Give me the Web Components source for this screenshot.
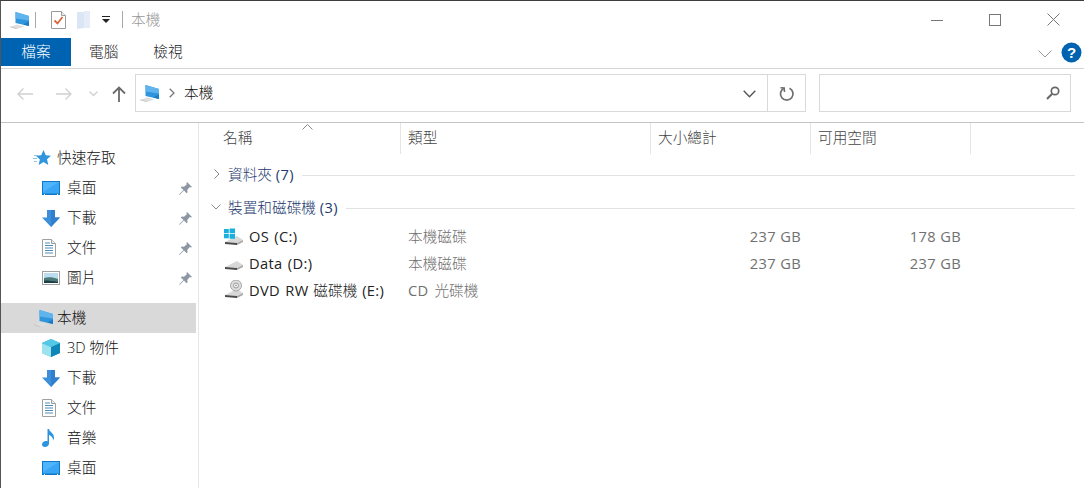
<!DOCTYPE html>
<html lang="zh-Hant"><head><meta charset="utf-8"><title>本機</title>
<style>
html,body{margin:0;height:100%;background:#fff;overflow:hidden}
body{font:300 14.67px/20px "Open Sans","Noto Sans CJK TC",sans-serif;color:#111}
</style></head><body>
<fx-window>
  <fx-titlebar slot="top">本機</fx-titlebar>
  <fx-ribbon slot="top"></fx-ribbon>
  <fx-address slot="top"></fx-address>
  <fx-nav slot="nav">
    <fx-nav-item icon="star" level="0">快速存取</fx-nav-item>
    <fx-nav-item icon="desktop" pin>桌面</fx-nav-item>
    <fx-nav-item icon="down" pin>下載</fx-nav-item>
    <fx-nav-item icon="doc" pin>文件</fx-nav-item>
    <fx-nav-item icon="pic" pin>圖片</fx-nav-item>
    <fx-nav-item icon="pc" level="0" selected style="margin-top:10px">本機</fx-nav-item>
    <fx-nav-item icon="cube">3D 物件</fx-nav-item>
    <fx-nav-item icon="down">下載</fx-nav-item>
    <fx-nav-item icon="doc">文件</fx-nav-item>
    <fx-nav-item icon="music">音樂</fx-nav-item>
    <fx-nav-item icon="desktop">桌面</fx-nav-item>
  </fx-nav>
  <fx-list slot="main">
    <fx-header></fx-header>
    <fx-group count="資料夾 (7)" style="margin-top:10px"></fx-group>
    <fx-group count="裝置和磁碟機 (3)" open style="margin-top:13px">
      <fx-drive icon="os" name="OS (C:)" type="本機磁碟" size="237 GB" free="178 GB"></fx-drive>
      <fx-drive icon="hdd" name="Data (D:)" type="本機磁碟" size="237 GB" free="237 GB"></fx-drive>
      <fx-drive icon="dvd" name="DVD RW 磁碟機 (E:)" type="CD 光碟機"></fx-drive>
    </fx-group>
  </fx-list>
</fx-window>
<script>
const DISK=y=>`<path d="M1 ${y}L13 ${y-6}l6 4-6 3z" fill="#d8d8d8"/><path d="M1 ${y}l12 1v2L1 ${y+2}z" fill="#4a4a4a"/><path d="M13 ${y+1}l6-3v2l-6 3z" fill="#a8a8a8"/>`;
const ICONS={
pc:`<svg width="21" height="18" viewBox="0 0 21 18"><path d="M1 16l7-2.500 7.500 2L7.500 18z" fill="#dedede"/><path d="M1 16l6.500 2v-.6L1.500 15.500z" fill="#b5b5b5"/><path d="M6.500 1 20 5v10L6.500 12z" fill="#2f95dc"/><path d="M6.500 1 20 5v4.500L6.500 7.500z" fill="#5fb4ee"/><path d="M20 15l-6-1.400 6-3z" fill="#1b7cc4"/></svg>`,
star:`<svg width="18" height="17" viewBox="0 0 18 17"><path d="M10.500 0l2.300 5.300 5.200.4-4 3.600 1.300 5.700-4.800-3-3.800 2.600-1-.2 1.200-5-4-3.600 5.300-.5z" fill="#2f95dc"/><path d="M1 5.500h4M0 8.500h4M1 11.500h3" stroke="#8cc4ea" stroke-width="1.200"/></svg>`,
desktop:`<svg width="18" height="14" viewBox="0 0 18 14"><rect width="18" height="14" fill="#0f78c8"/><rect x="1" y="1" width="16" height="11.500" fill="#38a6f5"/><path d="M1 1h16L1 11z" fill="#4eb4fb"/><path d="M2 13.500h1M15 13.500h1" stroke="#fff"/></svg>`,
down:`<svg width="18" height="17" viewBox="0 0 18 17"><path d="M5 0h8v7.500h5L9 17 0 7.500h5z" fill="#3d8fdc"/><path d="M9 0h4v7.500h5L9 17z" fill="#3080cc"/></svg>`,
doc:`<svg width="14" height="18" viewBox="0 0 14 18"><path d="M.5.500h9l4 4v13H.5z" fill="#fff" stroke="#a0a0a0"/><path d="M9.500.500v4h4" fill="#e8e8e8" stroke="#a0a0a0"/><path d="M3 4h5M3 6.500h8M3 9h8M3 11.500h8M3 14h8" stroke="#4f8fb8"/></svg>`,
pic:`<svg width="18" height="14" viewBox="0 0 18 14"><rect x=".5" y=".5" width="17" height="13" fill="#fff" stroke="#a0a0a0"/><rect x="2" y="2" width="14" height="10" fill="#bcdcf0"/><path d="M2 7c4-1 9-1 14 1v4H2z" fill="#4d7a78"/><path d="M2 9.500c5 0 9 .5 14 1.500V12H2z" fill="#1f3f48"/></svg>`,
cube:`<svg width="18" height="18" viewBox="0 0 18 18"><path d="M9 0l9 4v10l-9 4-9-4V4z" fill="#2aa9d6"/><path d="M0 4l9 4v10l-9-4z" fill="#9ce3ef"/><path d="M18 4 9 8v10l9-4z" fill="#0f86b8"/><path d="M9 0l9 4-9 4-9-4z" fill="#54c8e6"/></svg>`,
music:`<svg width="14" height="18" viewBox="0 0 14 18"><path d="M5.500 0h1.500c.5 3 5 4 5 8.500 0 1-.3 2-1 3 .2-3-2-5-4-5.500V14.500c0 2-2 3.500-4 3.500S0 17 0 15.200 2 12 4 12c.6 0 1.100.1 1.500.3z" fill="#2c93e0"/></svg>`,
pin:`<svg width="13" height="13" viewBox="0 0 13 13"><path d="M8 0l5 5-1.200.6-1-.5L8.200 8l.4 2.300-1 1L5 8.500 1 12.500l-1 .5.500-1 4-4L1.800 5.400l1-1L5 4.800 7.900 2.200l-.5-1z" fill="#8d97a3"/></svg>`,
os:`<svg width="20" height="20" viewBox="0 0 20 20">${DISK(16)}<path d="M0 8h4.800v4.300H0zM5.600 8H11v4.800H5.600zM0 3h4.800v4.200H0zM5.600 2.500H11v4.700H5.600z" fill="#19b0e0"/></svg>`,
hdd:`<svg width="20" height="20" viewBox="0 0 20 20">${DISK(14)}</svg>`,
dvd:`<svg width="20" height="20" viewBox="0 0 20 20">${DISK(15)}<circle cx="12" cy="5.500" r="5.500" fill="#dcdcdc" stroke="#a8a8a8"/><circle cx="12" cy="5.500" r="2.500" fill="#f2f2f2" stroke="#9a9a9a"/><circle cx="12" cy="5.500" r=".8" fill="#8a8a8a"/></svg>`
};
const wrapLatin=s=>s.replace(/[\x21-\x7e]+(?: [\x21-\x7e]+)*/g,m=>`<span class="lat">${m}</span>`);
const LAT=`.lat{font-weight:400;letter-spacing:.36px}`;
function def(name,html){
  customElements.define(name,class extends HTMLElement{
    constructor(){super();this.attachShadow({mode:"open"})}
    connectedCallback(){this.shadowRoot.innerHTML=typeof html==="function"?html(this):html;}
  });
}
def("fx-window",`<style>
:host{display:flex;flex-direction:column;height:100vh;box-sizing:border-box;border-top:1px solid #3d3d3d;border-left:1px solid #555}
.body{display:flex;flex:1;min-height:0}
.nav{width:197px;flex:none;border-right:1px solid #e6e6e6;overflow:hidden}
.main{flex:1;min-width:0;overflow:hidden}
</style><slot name="top"></slot><div class="body"><div class="nav"><slot name="nav"></slot></div><div class="main"><slot name="main"></slot></div></div>`);
def("fx-titlebar",`<style>
:host{display:flex;align-items:center;height:37px;color:#999}
.q{display:flex;align-items:center;padding-left:8px}
.sep{width:1px;height:16px;background:#a8a8a8}
.win{margin-left:auto;display:flex;align-items:center;gap:46px;padding-right:24px}
svg{display:block}
</style><div class="q">${ICONS.pc}
<i class="sep" style="margin-left:5px"></i>
<svg style="margin-left:15px" width="15" height="18" viewBox="0 0 15 18"><path d="M.5.500h10l4 4v13H.5z" fill="#fff" stroke="#9c9c9c"/><path d="M10.500.500v4h4" fill="#eee" stroke="#9c9c9c"/><path d="M3.500 9.500l3 3 5-6.500" fill="none" stroke="#d9653a" stroke-width="1.800"/></svg>
<svg style="margin-left:11px" width="13" height="18" viewBox="0 0 13 18"><path d="M0 1h7l6-1v17H7l-7 1z" fill="#dbe6f4"/><path d="M7 0h6v17H7z" fill="#e6edf8"/></svg>
<svg style="margin-left:12px" width="8" height="8" viewBox="0 0 8 8"><path d="M0 0h8v1H0zM0 3h8L4 7z" fill="#222"/></svg>
<i class="sep" style="margin-left:12px;height:17px"></i>
<span style="margin:-2px 0 0 8px"><slot></slot></span></div>
<div class="win">
<svg width="12" height="12" viewBox="0 0 12 12"><path d="M0 6.500h12" stroke="#777"/></svg>
<svg width="12" height="12" viewBox="0 0 12 12"><rect x=".5" y=".5" width="11" height="11" fill="none" stroke="#777"/></svg>
<svg width="13" height="13" viewBox="0 0 13 13"><path d="M.5.500l12 12M12.500.500l-12 12" stroke="#777"/></svg>
</div>`);
def("fx-ribbon",`<style>
:host{display:flex;align-items:stretch;height:30px;border-bottom:1px solid #d5d5d5;box-sizing:content-box}
.tab{height:28px;line-height:27px;color:#222}
.file{width:70px;background:#0063b1;color:#fff;text-align:center}
.r{margin-left:auto;display:flex;align-items:flex-start;padding:4px 2px 0 0;gap:9px}
svg{display:block}
</style><div class="tab file">檔案</div><div class="tab" style="margin-left:18px">電腦</div><div class="tab" style="margin-left:35px">檢視</div>
<div class="r"><svg style="margin-top:8px" width="14" height="8" viewBox="0 0 14 8"><path d="M.5.500L7 7l6.500-6.500" fill="none" stroke="#999"/></svg>
<svg width="21" height="21" viewBox="0 0 21 21"><circle cx="10.500" cy="10.500" r="10" fill="#0063b1"/><text x="10.500" y="15.500" text-anchor="middle" font-family="Liberation Sans" font-weight="700" font-size="15" fill="#fff">?</text></svg></div>`);
def("fx-address",`<style>
:host{display:flex;align-items:flex-start;height:53px;border-bottom:1px solid #c4c4c4;color:#111}
.navs{width:134px;flex:none;display:flex;align-items:center;height:39px;padding-top:10px;box-sizing:border-box;padding-left:16px}
.addr{margin-top:5px;width:671px;height:38px;box-sizing:border-box;border:1px solid #d9d9d9;display:flex;align-items:center;flex:none}
.ref{margin-left:auto;border-left:1px solid #d9d9d9;width:37px;height:36px;display:flex;align-items:center;justify-content:center;position:relative}
.chev{position:absolute;left:-25px;top:15px}
.search{margin:5px 0 0 13px;width:252px;height:38px;box-sizing:border-box;border:1px solid #d9d9d9;display:flex;align-items:center;justify-content:flex-end;padding-right:10px}
svg{display:block;flex:none}
</style><div class="navs">
<svg width="16" height="12" viewBox="0 0 16 12"><path d="M16 6H1M6.500.500L1 6l5.500 5.500" fill="none" stroke="#d0d0d0" stroke-width="1.300"/></svg>
<svg style="margin-left:23px" width="16" height="12" viewBox="0 0 16 12"><path d="M0 6h15M9.500.500L15 6l-5.500 5.500" fill="none" stroke="#d0d0d0" stroke-width="1.300"/></svg>
<svg style="margin-left:17px" width="9" height="6" viewBox="0 0 9 6"><path d="M.5.500l4 4 4-4" fill="none" stroke="#d0d0d0" stroke-width="1.300"/></svg>
<svg style="margin-left:14px" width="14" height="16" viewBox="0 0 14 16"><path d="M7 16V1.500M1 7.500l6-6 6 6" fill="none" stroke="#6a6a6a" stroke-width="1.800"/></svg>
</div><div class="addr">
<span style="margin-left:3px">${ICONS.pc}</span>
<svg style="margin-left:9px" width="6" height="10" viewBox="0 0 6 10"><path d="M.7.700 5 5 .7 9.300" fill="none" stroke="#777" stroke-width="1.300"/></svg>
<span style="margin:-2px 0 0 9px;line-height:20px">本機</span>
<span class="ref"><svg class="chev" width="13" height="8" viewBox="0 0 13 8"><path d="M.7.700l5.800 6 5.800-6" fill="none" stroke="#555" stroke-width="1.400"/></svg>
<svg width="16" height="17" viewBox="0 0 16 17"><path d="M10.500 3.200a6.300 6.300 0 1 1-5.500 0" fill="none" stroke="#6e6e6e" stroke-width="1.700"/><path d="M1.500 2.700 5.200 3l.3 4" fill="none" stroke="#6e6e6e" stroke-width="1.600"/></svg></span>
</div><div class="search"><svg width="14" height="14" viewBox="0 0 14 14"><circle cx="9" cy="5" r="3.700" fill="none" stroke="#666" stroke-width="1.700"/><path d="M6.200 7.800 1 13" stroke="#666" stroke-width="2"/></svg></div>`);
def("fx-nav",`<style>:host{display:block;padding-top:20px}</style><slot></slot>`);
def("fx-nav-item",el=>{
  const top=el.getAttribute("level")==="0",sel=el.hasAttribute("selected");
  const name=el.getAttribute("icon");
  return `<style>
:host{display:flex;align-items:center;height:30px;margin-right:2px;background:${sel?"#d9d9d9":"transparent"}}
.ic{width:22px;margin-left:${top?"32px":"41px"};height:20px;display:flex;align-items:center;flex:none}
.ic svg{display:block}
.t{margin:-2px 0 0 ${top?"2px":"3px"};white-space:nowrap;flex:1}
.p{margin-right:4px;display:flex}
</style><span class="ic">${ICONS[name]}</span><span class="t"><slot></slot></span>${el.hasAttribute("pin")?`<span class="p">${ICONS.pin}</span>`:""}`;
});
def("fx-list",`<style>:host{display:block}</style><slot></slot>`);
def("fx-header",`<style>
:host{display:grid;grid-template-columns:202px 250px 160px 160px;height:31px;color:#444;position:relative}
div{border-right:1px solid #e5e5e5;line-height:29px;padding-left:7px;white-space:nowrap;box-sizing:border-box}
.first{padding-left:24px}
svg{position:absolute;left:103px;top:1px}
</style><div class="first">名稱</div><div>類型</div><div>大小總計</div><div>可用空間</div>
<svg width="11" height="6" viewBox="0 0 11 6"><path d="M.5 5.500l5-5 5 5" fill="none" stroke="#888"/></svg>`);
def("fx-group",el=>{
  const open=el.hasAttribute("open");
  return `<style>
:host{display:block}
.h{display:flex;align-items:center;height:20px;color:#1e3a6e;padding-left:${open?"12px":"15px"}}
.h svg{flex:none}
.l{flex:1;height:1px;background:#e2e2e2;margin:2px 9px 0 8px}
.t{margin:-1px 0 0 ${open?"7px":"8px"};white-space:nowrap}
.rows{padding-top:${open?"5px":"0"}}
${LAT}
</style><div class="h">${open?`<svg width="10" height="6" viewBox="0 0 10 6"><path d="M.5.500 5 5 9.500.500" fill="none" stroke="#888"/></svg>`:`<svg width="6" height="10" viewBox="0 0 6 10"><path d="M.5.500 5 5 .5 9.500" fill="none" stroke="#888"/></svg>`}<span class="t">${wrapLatin(el.getAttribute("count"))}</span><span class="l"></span></div><div class="rows"><slot></slot></div>`;
});
def("fx-drive",el=>{
  const a=k=>el.getAttribute(k)||"";
  return `<style>
:host{display:grid;grid-template-columns:202px 250px 160px 160px;height:27px;align-items:center;color:#707070;white-space:nowrap}
.n{display:flex;align-items:center;padding-left:25px;color:#222;word-spacing:1px}
.n svg{display:block;margin-right:5px;flex:none}
.ty{padding-left:7px;word-spacing:2px}
.s{text-align:right;padding-right:10px}
${LAT}
</style><div class="n">${ICONS[a("icon")]}<span>${wrapLatin(a("name"))}</span></div><div class="ty">${wrapLatin(a("type"))}</div><div class="s">${wrapLatin(a("size"))}</div><div class="s">${wrapLatin(a("free"))}</div>`;
});
</script>
</body></html>
